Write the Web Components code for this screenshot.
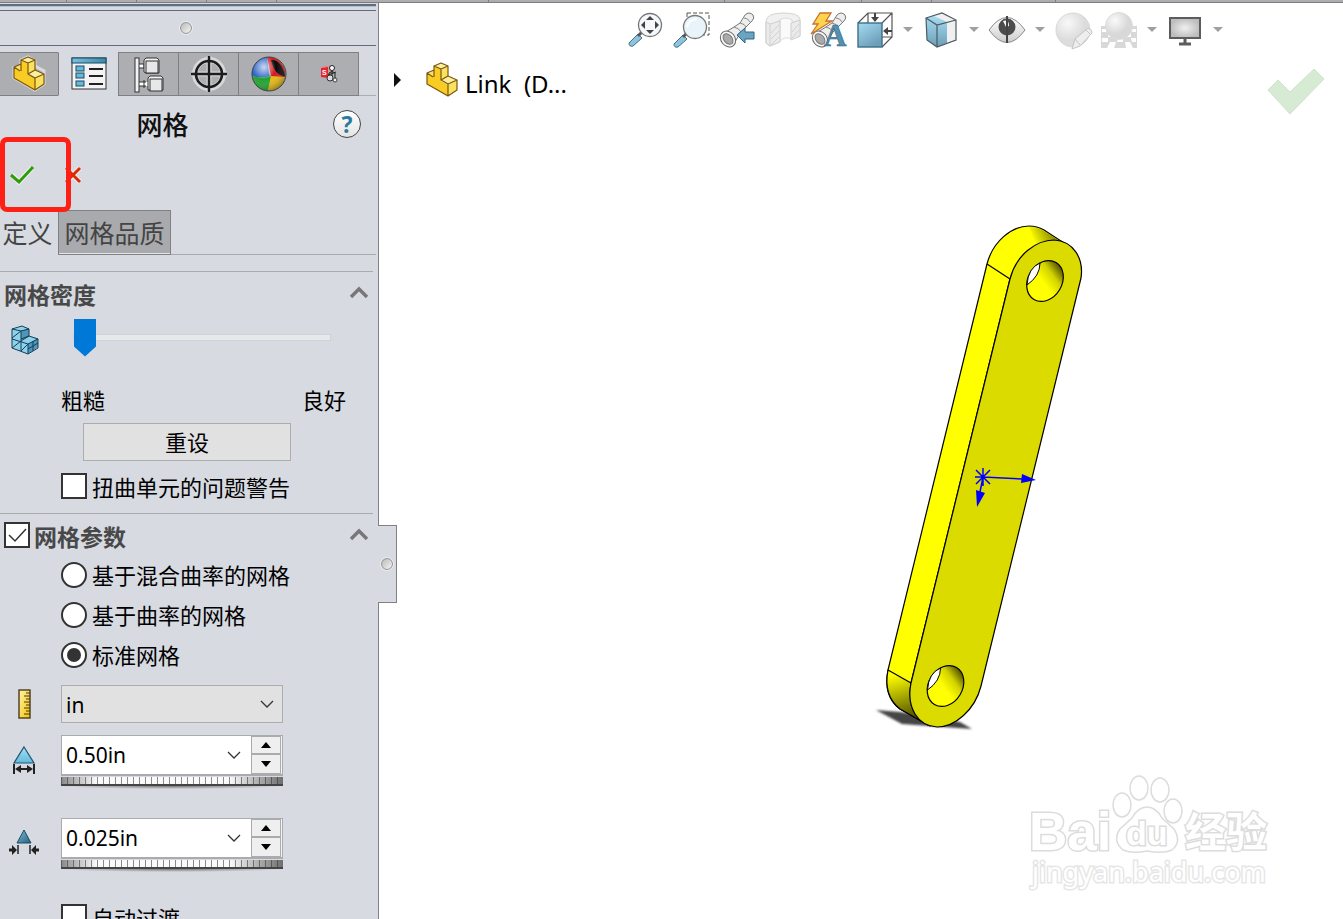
<!DOCTYPE html>
<html lang="zh-CN">
<head>
<meta charset="utf-8">
<title>网格</title>
<style>
html, body { height: 100%; }
body { margin: 0; overflow: hidden; background: #fff; color: #000; font: 22px/30px "Noto Sans", "Noto Sans CJK SC", sans-serif; }
</style>
</head>
<body>
<cad-app>
  <cad-ribbon slot="ribbon"></cad-ribbon>
  <cad-panel slot="panel">
    <cad-tabs></cad-tabs>
    <cad-title>网格</cad-title>
    <cad-confirm></cad-confirm>
    <cad-subtabs></cad-subtabs>
    <cad-group heading="网格密度">
      <cad-density></cad-density>
      <cad-check>扭曲单元的问题警告</cad-check>
    </cad-group>
    <cad-group heading="网格参数" checkable>
      <cad-radios></cad-radios>
      <cad-unit></cad-unit>
      <cad-spin icon="size" value="0.50in" label="单元大小"></cad-spin>
      <cad-spin icon="tolerance" value="0.025in" label="公差"></cad-spin>
      <cad-check class="last">自动过渡</cad-check>
    </cad-group>
  </cad-panel>
  <cad-viewport slot="view">
    <cad-toolbar></cad-toolbar>
    <cad-tree>Link  (D...</cad-tree>
  </cad-viewport>
</cad-app>

<script>
const PART = `
  <path d="M2 12L2 22L23 34L32 28V15L23 10V5L16 1L9 4V14Z" fill="none" stroke="#fff" stroke-width="3" opacity=".55"/>
  <path d="M2 12L9 15V7L16 10V19L23 23V34L2 22Z" fill="#f8cc22"/>
  <path d="M9 4L16 7V18L9 15Z" fill="#f8cc22"/>
  <path d="M16 7L23 4V15L16 18Z" fill="#fbe25e"/><path d="M9 4L16 1L23 4L16 7Z" fill="#fdf1a0"/>
  <path d="M2 12L9 8V15L7 15Z" fill="#fbe25e"/>
  <path d="M16 18L24 14L32 18L23 22Z" fill="#fdf09a"/><path d="M23 22L32 18V28L23 34Z" fill="#fbe25e"/>
  <path d="M2 11V22L23 34L32 28V18L23 14V4L16 1L9 4V8ZM2 11L8 15M9 4V15M9 4L16 7L23 4M16 7V18L23 22L32 18M23 22V34M16 18L23 14" fill="none" stroke="#7a5512" stroke-width="1.2" stroke-linejoin="round"/>`;
const BARREL = `
  <path d="M5 21L15 15L21 11L26 3Q30 -1 34 3Q36 6 33 9L27 15L22 20L14 33Z" fill="#eee" stroke="#777"/>
  <path d="M15 15Q20 16 22 20M21 11Q26 12 27 15M25 6Q29 6 31 10" fill="none" stroke="#888"/>
  <ellipse cx="9" cy="27" rx="7" ry="8.500" transform="rotate(-40 9 27)" fill="#f6f6f6" stroke="#666"/>
  <ellipse cx="9" cy="27" rx="4" ry="6" transform="rotate(-40 9 27)" fill="#aaa" stroke="#777"/>`;
const ICONS = {
  part: [34, 36, PART],
  property: [36, 34, `
    <defs><linearGradient id="g"><stop stop-color="#7cc0de"/><stop offset="1" stop-color="#3f86a8"/></linearGradient></defs>
    <rect x="1" y="1" width="34" height="31" fill="#f3f3f4" stroke="#333"/>
    <rect x="1" y="1" width="34" height="5" fill="url(#g)" stroke="#134c68"/>
    <g fill="#6bb6d8" stroke="#134c68"><rect x="5" y="9" width="8" height="5"/><rect x="5" y="16" width="8" height="5"/><rect x="5" y="24" width="8" height="5"/></g>
    <path d="M18 12H32M18 19H32M18 27H32" stroke="#222" stroke-width="2"/>`],
  config: [36, 38, `
    <path d="M7 11H15M7 29H19M10 10V12M13 27V31" stroke="#fff" stroke-width="4"/>
    <path d="M7 9H13M7 13H15M7 27H15M7 31H15M13 9V13M13 25V33" stroke="#333"/>
    <rect x="4" y="3" width="4" height="34" fill="#f4f4f4" stroke="#333"/>
    <path d="M13 17V5L15 3H26L28 5V18H15ZM17 35V23L19 21H30L32 23V35Z" fill="#f2f2f2" stroke="#333"/>
    <rect x="15" y="6" width="12" height="12" fill="#e8e8e8" stroke="#333"/><rect x="19" y="24" width="12" height="12" fill="#e8e8e8" stroke="#333"/>`],
  target: [38, 38, `
    <circle cx="19" cy="19" r="14" fill="none" stroke="#d8d8da" stroke-width="6"/><path d="M19 1V37M1 19H37" stroke="#d4d4d6" stroke-width="5"/>
    <circle cx="19" cy="19" r="13" fill="none" stroke="#1c1c1c" stroke-width="2.600"/><path d="M19 1V37M1 19H37" stroke="#1c1c1c" stroke-width="2.400"/>`],
  ball: [36, 36, `
    <defs><radialGradient id="b" cx=".35" cy=".3" r=".8"><stop stop-color="#fff" stop-opacity=".75"/><stop offset=".45" stop-color="#fff" stop-opacity="0"/><stop offset="1" stop-opacity=".45"/></radialGradient></defs>
    <path d="M18 18L16 1A17 17 0 0 0 1 20Q10 23 19 20Z" fill="#2a63c8"/>
    <path d="M1 20Q10 23 20 20L17 35A17 17 0 0 1 1 20Z" fill="#1fa32c"/>
    <path d="M20 20L34 20A17 17 0 0 1 17 35Z" fill="#e8b90c"/>
    <path d="M16 1L20 20L34 21A17 17 0 0 0 19 1Z" fill="#d01820"/>
    <path d="M20 4Q30 3 34 20Q24 20 20 4Z" fill="#080808"/>
    <circle cx="18" cy="18" r="17" fill="url(#b)" stroke="#444"/>`],
  bot: [20, 20, `
    <path d="M2 4L9 3V14L2 13Z" fill="#e8232b"/><path d="M4 3L11 2V12" fill="none" stroke="#f57b80"/><text x="3" y="11" font-size="7" font-weight="700" font-family="Liberation Sans, sans-serif" fill="#fff">S</text>
    <circle cx="13" cy="4" r="2.500" fill="#fff" stroke="#222"/><path d="M10 17V9Q13 6 16 9V16M9 11L17 8M13 7V17" fill="none" stroke="#222"/><circle cx="11" cy="14" r="3" fill="#ddd" stroke="#333"/><circle cx="16" cy="16" r="2" fill="#eee" stroke="#444"/>`],
  blocks: [28, 30, `
    <path d="M1 5L11 1L18 4V11L27 13V22L17 29L1 23Z" fill="#8fd0ea"/>
    <path d="M10 6L18 3V11L10 15ZM17 19L27 13V22L17 29Z" fill="#4f96b8"/>
    <path d="M1 4L11 1L18 4V11L27 14V23L17 29L1 23ZM1 4L10 6L18 4M10 6V26M1 14L17 19L27 14M17 19V29M10 16L18 11M1 13L10 6M1 23L10 16M10 26L17 19M17 24L27 18M22 16V26M18 11L10 14" fill="none" stroke="#123f58"/>`],
  ruler: [13, 30, `
    <defs><linearGradient id="r" x2="1" y2="1"><stop stop-color="#fff3b0"/><stop offset="1" stop-color="#f4c400"/></linearGradient></defs>
    <rect x="1" y="1" width="11" height="28" fill="url(#r)" stroke="#4a3b1a" stroke-width="1.400"/>
    <path d="M8 4H12M6 7H12M8 10H12M6 13H12M8 16H12M6 19H12M8 22H12M6 25H12" stroke="#4a3b1a"/>`],
  size: [24, 30, `
    <defs><linearGradient id="s" x2="0" y2="1"><stop stop-color="#a9e0f5"/><stop offset="1" stop-color="#62b9dc"/></linearGradient></defs>
    <path d="M12 2L22 18H2Z" fill="url(#s)" stroke="#1d5673" stroke-width="1.200"/>
    <path d="M2 19V29M22 19V29" stroke="#222" stroke-width="2"/><path d="M5 24H19" stroke="#222" stroke-width="2"/><path d="M3 24L9 20V28ZM21 24L15 20V28Z" fill="#222"/>`],
  tolerance: [32, 30, `
    <defs><linearGradient id="t" x2="1" y2="1"><stop stop-color="#7fc0dd"/><stop offset="1" stop-color="#235f7d"/></linearGradient></defs>
    <path d="M16 2L23 15H9Z" fill="url(#t)" stroke="#1d4b64"/>
    <path d="M10 17V26M22 17V26" stroke="#222" stroke-width="1.500"/><path d="M9 22L4 17V27ZM23 22L28 17V27Z" fill="#222"/><path d="M1 22H5M27 22H31" stroke="#222" stroke-width="3"/>`],
  fit: [36, 36, `
    <path d="M2 31L11 22L15 26L6 34Q2 35 2 31Z" fill="#8fc3dd" stroke="#3d6f88"/><path d="M11 24L16 19" stroke="#555" stroke-width="3"/>
    <circle cx="23" cy="13" r="11.500" fill="#f4f8fb" stroke="#777" stroke-width="1.300"/>
    <path d="M23 4L27 8H19ZM23 22L27 18H19ZM14 13L18 9V17ZM32 13L28 9V17Z" fill="#444"/>`],
  area: [38, 36, `
    <path d="M14 1H36V23H26M14 1V5" fill="none" stroke="#555" stroke-dasharray="4 2"/>
    <path d="M1 32L10 23L14 27L5 35Q1 36 1 32Z" fill="#8fc3dd" stroke="#3d6f88"/><path d="M10 25L15 20" stroke="#555" stroke-width="3"/>
    <circle cx="22" cy="15" r="11.500" fill="#e9f4fa" stroke="#777" stroke-width="1.300"/>
    <path d="M14 15Q16 7 24 7" fill="none" stroke="#fff" stroke-width="2"/>`],
  previous: [36, 36, BARREL + `<path d="M18 23L26 16V20H35V27H26V31Z" fill="#6aa4c0" stroke="#2f6480"/>`],
  section: [36, 36, `
    <path d="M1 9Q2 1 18 1Q34 1 35 7V24L27 27V8Q18 4 12 10V31L5 34L1 31Z" fill="#f1f1f1" stroke="#d4d4d4"/>
    <path d="M15 8Q20 4 27 8V27Q20 24 15 29Z" fill="#fafafa" stroke="#ddd"/>
    <path d="M1 10L5 12L15 9V30L5 34L1 31ZM35 8L26 11V28L35 24Z" fill="#ebebeb" stroke="#cfcfcf"/>
    <path d="M5 12V34M6 21L14 13M6 27L14 19M6 33L14 25M27 20L34 12M27 26L34 18" stroke="#d2d2d2"/>`],
  annotate: [36, 36, BARREL + `
    <path d="M9 1H20L15 9H21L0 22L7 12H2Z" fill="#ffd34d" stroke="#c8722e" stroke-width="1.300"/>
    <text x="13" y="34" font-family="Liberation Serif, serif" font-weight="700" font-size="31" fill="#5590b0" stroke="#2f6480" stroke-width=".6">A</text>`],
  orient: [36, 36, `
    <defs><linearGradient id="o" x2=".6" y2="1"><stop stop-color="#a5dcf2"/><stop offset="1" stop-color="#6d9db8"/></linearGradient></defs>
    <path d="M1 11L11 1H35V25L25 35M25 11L35 1M11 1V11M25 25H35" fill="none" stroke="#555" stroke-width="1.200"/>
    <rect x="1" y="11" width="24" height="24" fill="url(#o)" stroke="#3d7088" stroke-width="1.400"/>
    <path d="M18 1V6M35 19H30" stroke="#444" stroke-width="2"/><path d="M18 10L14 5H22ZM26 19L31 15V23Z" fill="#444"/>`],
  display: [36, 36, `
    <defs><linearGradient id="d" x2="0" y2="1"><stop stop-color="#a5dcf2"/><stop offset="1" stop-color="#6d9db8"/></linearGradient></defs>
    <path d="M3 6L19 1L33 8V28L14 35L4 28Z" fill="#f0f0f0"/><path d="M3 6L11 4L24 10V31L14 35L4 28Z" fill="url(#d)"/>
    <path d="M3 6L19 1L33 8V28L14 35L4 28ZM3 6L14 13L33 8M14 13V35" fill="none" stroke="#4c5a62" stroke-width="1.200"/>`],
  eye: [36, 36, `
    <defs><linearGradient id="e" x2="0" y2="1"><stop stop-color="#fff"/><stop offset="1" stop-color="#ccc"/></linearGradient></defs>
    <path d="M0 18Q18 -7 36 18Q18 43 0 18Z" fill="url(#e)" stroke="#888"/>
    <circle cx="18" cy="15" r="8.500" fill="#4c4c4c"/><path d="M14 9Q20 7 20 14L17 15Z" fill="#fff"/><path d="M18 4V31" stroke="#444" stroke-width="2"/>`],
  appearance: [38, 38, `
    <defs><radialGradient id="a" cx=".35" cy=".3"><stop stop-color="#f8f8f8"/><stop offset="1" stop-color="#dcdcdc"/></radialGradient></defs>
    <circle cx="18" cy="18" r="17" fill="url(#a)" stroke="#d8d8d8"/>
    <path d="M17 37L20 27L33 16Q38 18 37 21L25 34Z" fill="#eee" stroke="#c4c4c4"/><path d="M20 27L25 33M31 18L36 23" stroke="#c4c4c4"/>`],
  scene: [36, 36, `
    <defs><radialGradient id="c" cx=".35" cy=".3"><stop stop-color="#fafafa"/><stop offset="1" stop-color="#d8d8d8"/></radialGradient></defs>
    <path d="M0 14H36V36H0Z" fill="#d8d8d8"/><path d="M1 17H7V20H1ZM8 21H14V25H7ZM1 26H7V30H1ZM9 30H15L13 36H6ZM17 26H22V30H16ZM24 30H29L32 36H25ZM29 17H35V20H29ZM25 21H30V25H25ZM30 26H35V30H31Z" fill="#fff"/>
    <circle cx="18" cy="14" r="13.500" fill="url(#c)" stroke="#ddd"/>`],
  monitor: [36, 36, `
    <defs><radialGradient id="m"><stop stop-color="#f0f0f0"/><stop offset="1" stop-color="#bdbdbd"/></radialGradient></defs>
    <rect x="3" y="6" width="30" height="20" fill="url(#m)" stroke="#5c5c5c" stroke-width="2"/><path d="M18 27V31M12 32H24" stroke="#5c5c5c" stroke-width="3"/>`],
  down: [10, 6, `<path d="M0 0H10L5 5Z" fill="#a0a0a0"/>`],
  chevron: [20, 14, `<path d="M2 11L10 3L18 11" fill="none" stroke="#777" stroke-width="3.400"/>`],
  drop: [14, 8, `<path d="M1 1L7 7L13 1" fill="none" stroke="#333" stroke-width="1.300"/>`],
  ok: [24, 20, `<path d="M2 10L9 17L22 3" fill="none" stroke="#fff" stroke-width="5" opacity=".6"/><path d="M1 10L9 17L23 2" fill="none" stroke="#2f9c0a" stroke-width="3"/>`],
  cancel: [18, 18, `<path d="M2 2L16 16M16 2L2 16" stroke="#fff" stroke-width="5" opacity=".6"/><path d="M2 2L16 16M16 2L2 16" stroke="#dc2a05" stroke-width="3"/>`],
  accept: [60, 48, `<path d="M2 22L12 12L24 24L48 1L58 11L24 46Z" fill="#d7ead3" stroke="#cfe3cc" stroke-linejoin="round"/>`],
  expand: [7, 14, `<path d="M0 0L7 7L0 14Z" fill="#111"/>`]
};
const icon = (name, mark = "") => {
  const [w, h, body] = ICONS[name];
  return `<svg ${mark} width="${w}" height="${h}" viewBox="0 0 ${w} ${h}" aria-hidden="true">${body}</svg>`;
};
const BASE = `
  :host { display: block; box-sizing: border-box; }
  * { box-sizing: border-box; }
  svg { display: block; flex: none; overflow: visible; }
  button { font: inherit; color: inherit; padding: 0; border: 0; background: none; display: grid; place-items: center; }
  .dot { width: 12px; height: 12px; border-radius: 50%; border: 1px solid #8c8c8c; background: linear-gradient(135deg, #bbb, #f4f4f4); outline: 1px solid #eceef0; }
`;
const define = (name, render) => customElements.define(name, class extends HTMLElement {
  constructor() { super(); this.attachShadow({ mode: "open" }); }
  connectedCallback() {
    const t = document.createElement("template");
    const [css, html] = render(this);
    t.innerHTML = `<style>${BASE}${css}</style>${html}`;
    this.shadowRoot.replaceChildren(t.content.cloneNode(true));
  }
});

define("cad-app", () => [`
  :host { height: 100vh; display: grid; grid-template: auto minmax(0, 1fr) / 379px minmax(0, 1fr); }
  .top { grid-column: 1 / -1; }
`, `<div class="top"><slot name="ribbon"></slot></div><slot name="panel"></slot><slot name="view"></slot>`]);

define("cad-ribbon", () => [`
  :host { height: 3px; background: #adadb1; border-bottom: 1px solid #7e7e80; display: flex; }
  i { width: 70px; border-right: 1px solid #7e7e80; }
  i:first-of-type { width: 67px; }
  .w { width: 212px; } .x { width: 236px; } .y { width: 137px; } .z { width: 124px; }
`, `<i></i><i></i><i></i><i></i><i class="w"></i><i class="x"></i><i class="y"></i><i></i><i class="z"></i>`]);

define("cad-panel", () => [`
  :host { background: #d7dae0; border-right: 1px solid #808184; position: relative; min-height: 0; }
  .scroll { height: 100%; overflow: hidden; }
  .head { margin: 1px 2px 6px 0; border-top: 2px solid #666a80; }
  .light { height: 1px; background: #a9c3cc; margin-bottom: 3px; }
  .bar { height: 36px; border-top: 1px solid #666a80; border-bottom: 1px solid #666a80; display: grid; place-items: center; padding-right: 4px; }
  .handle { position: absolute; left: 100%; top: 57%; width: 19px; height: 78px; background: #d7dae0; border: 1px solid #808184; border-left: 0; z-index: 2; }
`, `<div class="scroll">
  <div class="head"><div class="light"></div><div class="bar"><span class="dot"></span></div></div>
  <slot></slot></div><button class="handle" aria-label="折叠"><span class="dot"></span></button>`]);

define("cad-tabs", () => [`
  :host { display: flex; margin-right: 2px; }
  button { width: 60px; height: 44px; background: #adaeb2; border: 1px solid #7f8083; border-right: 0; }
  button:first-of-type { width: 58px; border-left: 0; }
  button.on { background: none; border-top-color: #d7dae0; border-bottom-color: #d7dae0; }
  button:last-of-type { width: 61px; border-right: 1px solid #7f8083; }
  i { flex: 1; border-bottom: 1px solid #adaeb2; }
`, ["part", "property", "config", "target", "ball", "bot"].map((n, i) =>
  `<button class="${i === 1 ? "on" : ""}" aria-label="${n}">${icon(n)}</button>`).join("") + "<i></i>"]);

define("cad-title", () => [`
  :host { display: flex; align-items: center; gap: 8px; height: 56px; padding-right: 17px; }
  h1 { flex: 1; margin: 0; padding-top: 2px; text-align: center; font-size: 26px; line-height: 32px; font-weight: 500; color: #111; }
  button { width: 28px; height: 28px; border: 1px solid #444; border-radius: 50%; background: linear-gradient(#fff, #e4e4e4); color: #2d7a9e; font: 700 23px/26px "Noto Sans", sans-serif; }
`, `<h1><slot></slot></h1><button aria-label="帮助">?</button>`]);

define("cad-confirm", () => [`
  :host { position: relative; display: flex; align-items: center; gap: 30px; height: 46px; padding-left: 10px; }
  .mark { position: absolute; left: 0; top: -15px; width: 71px; height: 75px; border: 5px solid #ff2015; border-radius: 7px; pointer-events: none; }
`, `<button aria-label="确定">${icon("ok")}</button><button aria-label="取消">${icon("cancel")}</button><span class="mark"></span>`]);

define("cad-subtabs", () => [`
  :host { display: flex; margin: 12px 2px 16px 0; font-size: 25px; line-height: 32px; color: #444; }
  button { height: 45px; width: 58px; padding-right: 3px; }
  button + button { width: 113px; padding: 0; background: #a9aaad; border: 1px solid #7f8083; box-shadow: inset 0 -1px #e6e6e8; }
  i { flex: 1; border-bottom: 1px solid #a9abaf; }
`, `<button>定义</button><button>网格品质</button><i></i>`]);

const BOX = `
  input[type=checkbox], input[type=radio] { appearance: none; flex: none; margin: 0; width: 26px; height: 26px; background: #fff; border: 2px solid #333; display: grid; place-items: center; }
  input[type=radio] { border-radius: 50%; }
  input[type=radio]:checked::before { content: ""; width: 14px; height: 14px; border-radius: 50%; background: #333; }
`;

define("cad-group", el => {
  const title = el.getAttribute("heading"), check = el.hasAttribute("checkable");
  return [BOX + `
  :host { margin-right: 5px; border-top: 1px solid #a9abaf; padding-bottom: 8px; }
  header { display: flex; align-items: center; height: 42px; padding: 0 4px; }
  h2 { flex: 1; margin: 0; padding-top: 4px; font-size: 23px; line-height: 30px; font-weight: 700; color: #484848; }
  label { display: block; }
  .box { display: grid; margin-right: 4px; }
  .box > * { grid-area: 1 / 1; }
  .box svg { pointer-events: none; }
`, `<header>${check ? `<span class="box"><input id="use" type="checkbox" checked><svg width="26" height="26"><path d="M5 13L11 19L22 7" fill="none" stroke="#333" stroke-width="1.500"/></svg></span>` : ""}
  <h2>${check ? `<label for="use">${title}</label>` : title}</h2><button aria-label="收起">${icon("chevron")}</button></header><slot></slot>`];
});

define("cad-density", () => [`
  .row { display: flex; align-items: center; height: 46px; padding: 0 42px 0 11px; gap: 34px; }
  .row svg { margin-top: 6px; }
  input { appearance: none; flex: 1; min-width: 0; height: 38px; margin: 0; background: none; }
  input::-webkit-slider-runnable-track { height: 7px; background: #e6e9e9; border: 1px solid #d0d3d6; }
  input::-webkit-slider-thumb { appearance: none; width: 22px; height: 38px; margin-top: -16px; background: #0078d7; clip-path: polygon(0 0, 100% 0, 100% 74%, 50% 100%, 0 74%); }
  .ends { display: flex; justify-content: space-between; margin: 24px 27px 7px 61px; line-height: 32px; }
  .reset { width: 208px; height: 38px; margin: 0 0 6px 83px; background: #e1e1e1; border: 1px solid #adadad; }
`, `<div class="row">${icon("blocks")}<input type="range" min="0" max="100" value="0" aria-label="网格密度"></div>
  <div class="ends"><span>粗糙</span><span>良好</span></div><button class="reset">重设</button>`]);

define("cad-check", () => [BOX + `
  :host(.last) { margin-top: 27px; }
  label { display: flex; align-items: center; gap: 5px; height: 38px; padding-left: 61px; }
  span { padding-top: 2px; }
`, `<label><input type="checkbox"><span><slot></slot></span></label>`]);

define("cad-radios", () => [BOX + `
  :host { display: grid; gap: 2px; margin-bottom: 11px; }
  label { display: flex; align-items: center; gap: 5px; height: 38px; padding-left: 61px; }
`, ["基于混合曲率的网格", "基于曲率的网格", "标准网格"].map((t, i) =>
  `<label><input type="radio" name="mesh" ${i === 2 ? "checked" : ""}><span>${t}</span></label>`).join("")]);

define("cad-unit", () => [`
  :host { display: grid; grid-template-columns: 49px 222px; column-gap: 12px; align-items: center; }
  .ico { display: grid; place-items: center; }
  .box { display: grid; align-items: center; }
  .box > * { grid-area: 1 / 1; }
  .box svg { justify-self: end; margin-right: 9px; pointer-events: none; }
  select { appearance: none; width: 100%; height: 38px; padding: 2px 4px 0; margin: 0; border: 1px solid #adadad; border-radius: 0; background: #e1e1e1; color: #000; font: 21px/30px "Noto Sans", sans-serif; }
`, `<span class="ico">${icon("ruler")}</span><span class="box"><select aria-label="单位"><option>in</option></select>${icon("drop")}</span>`]);

define("cad-spin", el => [`
  :host { display: grid; grid-template-columns: 47px 222px; column-gap: 14px; margin-top: 12px; height: 53px; }
  :host([icon=tolerance]) { margin-top: 30px; }
  .ico { display: grid; place-items: center; padding-bottom: 4px; }
  .box { height: 41px; display: flex; border: 1px solid #a9abaf; border-bottom-width: 2px; background: #fff; }
  input { flex: 1; min-width: 0; border: 0; padding: 0 4px 1px; background: none; color: #000; font: 21px/30px "Noto Sans", sans-serif; }
  .drop { width: 34px; }
  .ud { width: 31px; display: grid; grid-template-rows: 18px 20px; background: #f5f5f5; padding-right: 1px; }
  .ud button { border: 1px solid #a9abaf; background: #efefef; }
  .wheel { height: 9px; margin-top: 1px; border-bottom: 2px solid #444;
    background: linear-gradient(90deg, rgba(60,60,60,.6), rgba(255,255,255,0) 16%, rgba(255,255,255,0) 76%, rgba(50,50,50,.7)),
      repeating-linear-gradient(90deg, #8a8a8a 0 1px, #fafafa 1px 6px); }
  .shade { height: 3px; background: radial-gradient(50% 100% at 50% 0, #777, transparent); }
`, `<span class="ico">${icon(el.getAttribute("icon"))}</span><div>
  <div class="box"><input type="text" value="${el.getAttribute("value")}" aria-label="${el.getAttribute("label")}">
  <button class="drop" aria-label="列表">${icon("drop")}</button>
  <span class="ud"><button aria-label="增加"><svg width="10" height="6"><path d="M0 6L5 0L10 6Z"/></svg></button><button aria-label="减少"><svg width="10" height="6"><path d="M0 0L5 6L10 0Z"/></svg></button></span></div>
  <div class="wheel"></div><div class="shade"></div></div>`]);

define("cad-viewport", () => [`
  :host { display: grid; grid-template: minmax(0, 1fr) / minmax(0, 1fr); min-height: 0; background: #fff; }
  cad-scene, .over { grid-area: 1 / 1; }
`, `<cad-scene></cad-scene><div class="over"><slot></slot></div>`]);

define("cad-toolbar", () => [`
  :host { display: flex; align-items: center; justify-content: flex-end; gap: 10px; padding: 9px 120px 0 0; }
  button { width: 36px; height: 36px; }
  .s { width: 10px; }
`, ["fit", "area", "previous", "section", "annotate", "orient", "down", "display", "down", "eye", "down", "appearance", "scene", "down", "monitor", "down"].map(n =>
  `<button class="${n === "down" ? "s" : ""}" aria-label="${n}">${icon(n)}</button>`).join("")]);

define("cad-tree", () => [`
  :host { display: flex; align-items: flex-start; padding: 14px 17px 0 15px; }
  .exp { margin-top: 11px; }
  .part { margin: 0 6px 0 24px; }
  span { flex: 1; padding-top: 6px; font-size: 24px; line-height: 32px; white-space: pre; }
  .ok { margin-top: 6px; }
`, `<button class="exp" aria-label="展开">${icon("expand")}</button>${icon("part", 'class="part"')}<span><slot></slot></span><button class="ok" aria-label="确定">${icon("accept")}</button>`]);

define("cad-scene", () => [`
  :host { min-height: 0; }
  svg { width: 100%; height: 100%; }
`, `<svg viewBox="379 3 964 916" role="img" aria-label="Link">
  <defs>
    <linearGradient id="hole" gradientUnits="userSpaceOnUse" x1="8" y1="-20" x2="-1" y2="2"><stop stop-color="#4a4a00"/><stop offset=".5" stop-color="#d2d200"/><stop offset="1" stop-color="#ff0"/></linearGradient>
    <linearGradient id="low" gradientUnits="userSpaceOnUse" x1="893" y1="675" x2="905" y2="718"><stop stop-color="#ff0"/><stop offset="1" stop-color="#555500"/></linearGradient>
    <linearGradient id="high" gradientUnits="userSpaceOnUse" x1="1034" y1="242" x2="1058" y2="230"><stop stop-color="#ff0"/><stop offset="1" stop-color="#666600"/></linearGradient>
    <filter id="soft" x="-10%" y="-30%" width="120%" height="160%"><feGaussianBlur stdDeviation="1"/></filter>
    <g id="bore"><ellipse rx="17" ry="21.500" transform="rotate(31)" fill="url(#hole)" stroke="#000" stroke-width="1.200"/>
      <path d="M-18 4Q-17 -13 -5 -18Q-5 -5 -18 4Z" fill="#fff" stroke="#000"/></g>
  </defs>
  <path d="M876 710L900 712L960 722L972 729L902 724Z" fill="#444" filter="url(#soft)"/>
  <g stroke="#000" stroke-width="1.200" stroke-linejoin="round">
    <path d="M987 264C993 241 1012 226 1029 226Q1037 226 1044 230L1064 243L1010 279L911 683L930 726L900 709Q883 696 888 670Z" fill="#ff0"/>
    <path d="M1029 227Q1037 227 1044 231L1063 243Q1050 237 1036 244Z" fill="url(#high)" stroke="none"/>
    <path d="M888 670L911 683Q906 710 928 725L900 709Q883 696 888 670Z" fill="url(#low)"/>
    <path d="M987 264L1010 279" fill="none"/>
    <path d="M1010 279C1016 255 1036 240 1054 240C1073 241 1084 258 1081 278L981 686C975 710 955 727 937 727C918 726 906 708 911 683Z" fill="#dbdb00"/>
  </g>
  <use href="#bore" x="1045" y="281"/><use href="#bore" x="945.500" y="686"/>
  <g stroke="#00f" fill="#00f" stroke-width="1.500"><path d="M983 468V486M975 477H983L1022 479M976 470L990 484M990 470L976 484M983 477L980 492" fill="none"/>
    <path d="M1022 474L1036 480L1021 483ZM976 490L985 493L977 507Z" stroke="none"/></g>
  <g fill="#fff" stroke="#dcdcdc" stroke-width="1.500">
    <ellipse cx="1122" cy="805" rx="9" ry="12"/><ellipse cx="1139" cy="788" rx="9" ry="12"/><ellipse cx="1160" cy="790" rx="9" ry="12"/><ellipse cx="1173" cy="811" rx="9" ry="12"/>
    <path d="M1147 807Q1156 807 1162 818L1174 829Q1182 842 1172 850Q1163 854 1147 851Q1132 854 1123 850Q1112 841 1120 829L1132 818Q1138 807 1147 807Z"/>
    <g stroke-width="3" paint-order="stroke" font-weight="700">
      <text x="1029" y="850" font-family="Liberation Sans, sans-serif" font-size="53">Bai</text>
      <text x="1126" y="845" font-family="Liberation Sans, sans-serif" font-size="34">du</text>
      <text x="1185" y="847" font-family="Noto Sans CJK SC, sans-serif" font-size="41">经验</text>
      <text x="1032" y="882" font-family="Noto Sans, sans-serif" font-weight="400" font-size="27" stroke="#e6e6e6">jingyan.baidu.com</text>
    </g>
  </g>
</svg>`]);
</script>
</body>
</html>
